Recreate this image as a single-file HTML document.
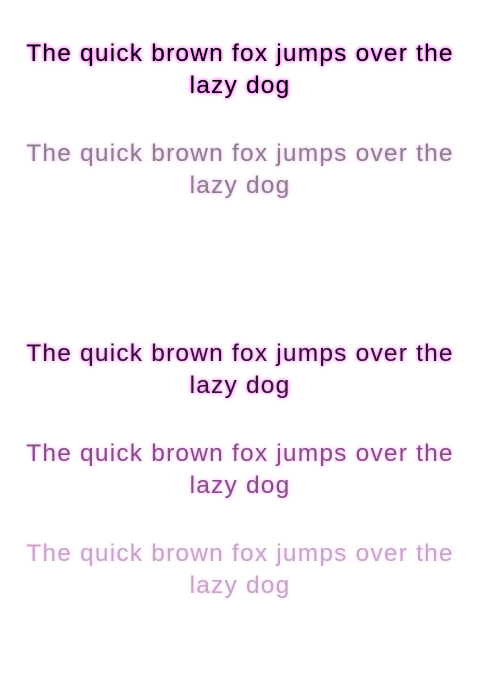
<!DOCTYPE html>
<html><head><style>
html,body{margin:0;padding:0;background:#fff;width:480px;height:692px;overflow:hidden}
.b{position:absolute;left:0;width:480px;text-align:center;font-family:"Liberation Sans",sans-serif;font-size:24.5px;line-height:32px;letter-spacing:1.2px;text-shadow:0 0 3px #f4f,0 0 4px #f9f}
</style></head><body>
<div class="b" style="top:38px;color:#000">The quick brown fox jumps over the<br>lazy dog</div>
<div class="b" style="top:138px;color:#858585;text-shadow:0 0 3px #f9f">The quick brown fox jumps over the<br>lazy dog</div>
<div class="b" style="top:338px;color:#2e142e;text-shadow:0 0 3px #f6f,0 0 4px #fbf">The quick brown fox jumps over the<br>lazy dog</div>
<div class="b" style="top:438px;color:#835083;text-shadow:0 0 3px #f9f">The quick brown fox jumps over the<br>lazy dog</div>
<div class="b" style="top:538px;color:#c6a6c6;text-shadow:0 0 3px #fcf">The quick brown fox jumps over the<br>lazy dog</div>
</body></html>
